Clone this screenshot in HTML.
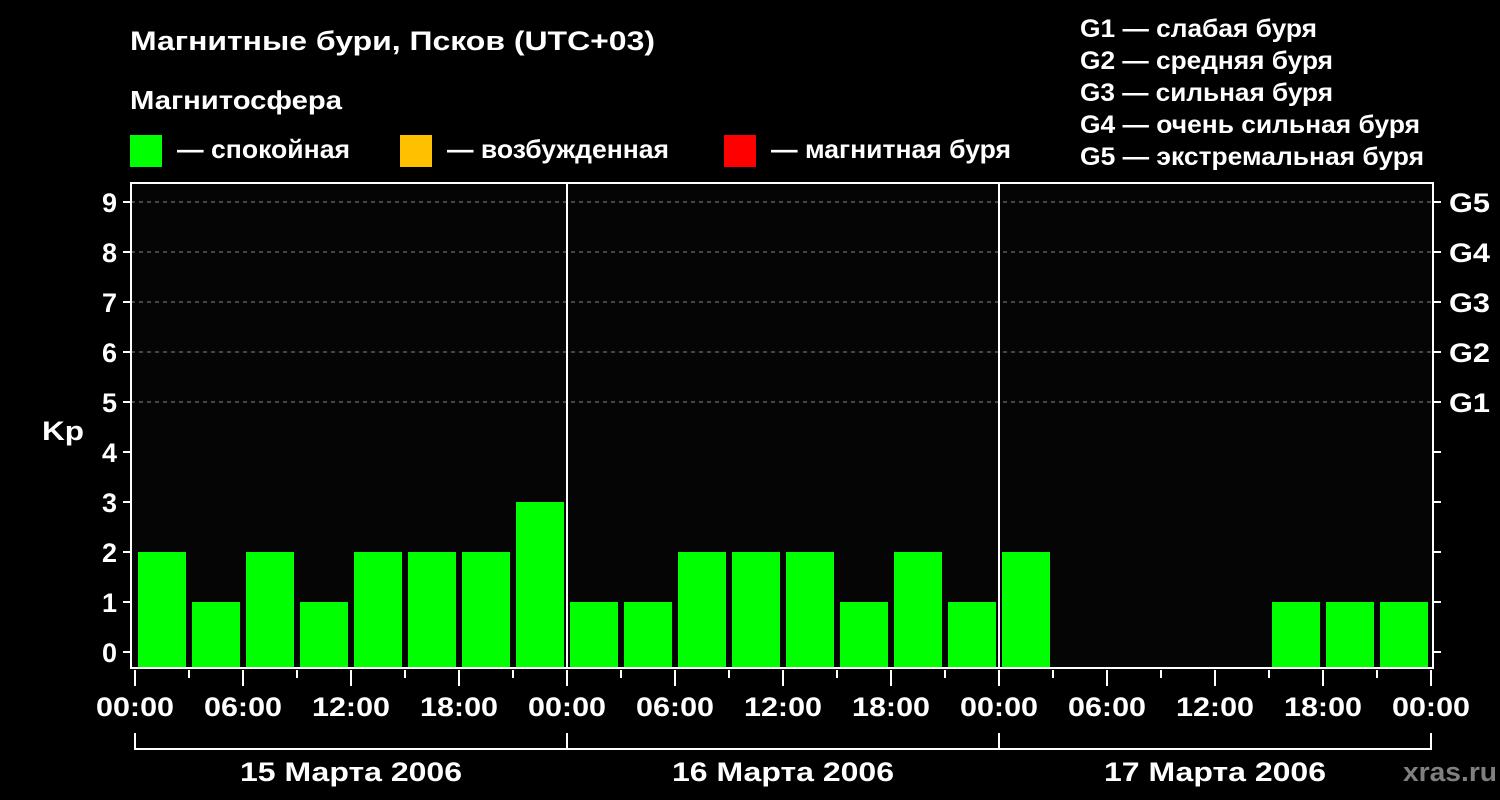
<!DOCTYPE html>
<html><head><meta charset="utf-8"><style>
html,body{margin:0;padding:0;background:#000;}
svg{display:block}
text{font-family:"Liberation Sans",Arial,sans-serif;font-weight:bold;fill:#fff}
</style></head><body>
<svg width="1500" height="800" viewBox="0 0 1500 800" xmlns="http://www.w3.org/2000/svg">
<rect width="1500" height="800" fill="#000"/>
<rect x="131" y="183" width="1302" height="485" fill="#050505"/>
<text x="130" y="50" font-size="27" textLength="525" lengthAdjust="spacingAndGlyphs">Магнитные бури, Псков (UTC+03)</text>
<text x="130" y="109" font-size="26" textLength="212" lengthAdjust="spacingAndGlyphs">Магнитосфера</text>
<rect x="130" y="135" width="32" height="32" fill="#00ff00"/>
<text x="177" y="158" font-size="26" textLength="173" lengthAdjust="spacingAndGlyphs">— спокойная</text>
<rect x="400" y="135" width="32" height="32" fill="#ffc000"/>
<text x="447" y="158" font-size="26" textLength="222" lengthAdjust="spacingAndGlyphs">— возбужденная</text>
<rect x="724" y="135" width="32" height="32" fill="#ff0000"/>
<text x="771" y="158" font-size="26" textLength="240" lengthAdjust="spacingAndGlyphs">— магнитная буря</text>
<g font-size="25">
<text x="1080" y="37" textLength="237" lengthAdjust="spacingAndGlyphs">G1 — слабая буря</text>
<text x="1080" y="69" textLength="253" lengthAdjust="spacingAndGlyphs">G2 — средняя буря</text>
<text x="1080" y="101" textLength="253" lengthAdjust="spacingAndGlyphs">G3 — сильная буря</text>
<text x="1080" y="133" textLength="340" lengthAdjust="spacingAndGlyphs">G4 — очень сильная буря</text>
<text x="1080" y="165" textLength="344" lengthAdjust="spacingAndGlyphs">G5 — экстремальная буря</text>
</g>
<g stroke="#888" stroke-width="1" stroke-dasharray="4,4">
<line x1="131" y1="202" x2="1433" y2="202"/><line x1="131" y1="252" x2="1433" y2="252"/>
<line x1="131" y1="302" x2="1433" y2="302"/><line x1="131" y1="352" x2="1433" y2="352"/>
<line x1="131" y1="402" x2="1433" y2="402"/>
</g>
<g fill="#00ff00">
<rect x="138" y="552" width="48" height="115"/><rect x="192" y="602" width="48" height="65"/>
<rect x="246" y="552" width="48" height="115"/><rect x="300" y="602" width="48" height="65"/>
<rect x="354" y="552" width="48" height="115"/><rect x="408" y="552" width="48" height="115"/>
<rect x="462" y="552" width="48" height="115"/><rect x="516" y="502" width="48" height="165"/>
<rect x="570" y="602" width="48" height="65"/><rect x="624" y="602" width="48" height="65"/>
<rect x="678" y="552" width="48" height="115"/><rect x="732" y="552" width="48" height="115"/>
<rect x="786" y="552" width="48" height="115"/><rect x="840" y="602" width="48" height="65"/>
<rect x="894" y="552" width="48" height="115"/><rect x="948" y="602" width="48" height="65"/>
<rect x="1002" y="552" width="48" height="115"/>
<rect x="1272" y="602" width="48" height="65"/><rect x="1326" y="602" width="48" height="65"/>
<rect x="1380" y="602" width="48" height="65"/>
</g>
<g stroke="#fff" stroke-width="2" fill="none">
<rect x="131" y="183" width="1302" height="485"/>
<line x1="567" y1="183" x2="567" y2="668"/><line x1="999" y1="183" x2="999" y2="668"/>
<path d="M123 202H131M123 252H131M123 302H131M123 352H131M123 402H131M123 452H131M123 502H131M123 552H131M123 602H131M123 652H131"/>
<path d="M1433 202H1441M1433 252H1441M1433 302H1441M1433 352H1441M1433 402H1441M1433 452H1441M1433 502H1441M1433 552H1441M1433 602H1441M1433 652H1441"/>
<path d="M135 670V686M189 670V678M243 670V686M297 670V678M351 670V686M405 670V678M459 670V686M513 670V678M567 670V686M621 670V678M675 670V686M729 670V678M783 670V686M837 670V678M891 670V686M945 670V678M999 670V686M1053 670V678M1107 670V686M1161 670V678M1215 670V686M1269 670V678M1323 670V686M1377 670V678M1431 670V686"/>
<path d="M135 733V749H1431V733M567 733V749M999 733V749"/>
</g>
<g font-size="27" text-anchor="end">
<text x="117" y="212">9</text><text x="117" y="262">8</text><text x="117" y="312">7</text>
<text x="117" y="362">6</text><text x="117" y="412">5</text><text x="117" y="462">4</text>
<text x="117" y="512">3</text><text x="117" y="562">2</text><text x="117" y="612">1</text>
<text x="117" y="662">0</text>
</g>
<text x="42" y="440" font-size="27" textLength="42" lengthAdjust="spacingAndGlyphs">Kp</text>
<g font-size="27">
<text x="1449" y="212" textLength="41" lengthAdjust="spacingAndGlyphs">G5</text><text x="1449" y="262" textLength="41" lengthAdjust="spacingAndGlyphs">G4</text><text x="1449" y="312" textLength="41" lengthAdjust="spacingAndGlyphs">G3</text>
<text x="1449" y="362" textLength="41" lengthAdjust="spacingAndGlyphs">G2</text><text x="1449" y="412" textLength="41" lengthAdjust="spacingAndGlyphs">G1</text>
</g>
<g font-size="27">
<text x="96" y="716" textLength="78" lengthAdjust="spacingAndGlyphs">00:00</text>
<text x="204" y="716" textLength="78" lengthAdjust="spacingAndGlyphs">06:00</text>
<text x="312" y="716" textLength="78" lengthAdjust="spacingAndGlyphs">12:00</text>
<text x="420" y="716" textLength="78" lengthAdjust="spacingAndGlyphs">18:00</text>
<text x="528" y="716" textLength="78" lengthAdjust="spacingAndGlyphs">00:00</text>
<text x="636" y="716" textLength="78" lengthAdjust="spacingAndGlyphs">06:00</text>
<text x="744" y="716" textLength="78" lengthAdjust="spacingAndGlyphs">12:00</text>
<text x="852" y="716" textLength="78" lengthAdjust="spacingAndGlyphs">18:00</text>
<text x="960" y="716" textLength="78" lengthAdjust="spacingAndGlyphs">00:00</text>
<text x="1068" y="716" textLength="78" lengthAdjust="spacingAndGlyphs">06:00</text>
<text x="1176" y="716" textLength="78" lengthAdjust="spacingAndGlyphs">12:00</text>
<text x="1284" y="716" textLength="78" lengthAdjust="spacingAndGlyphs">18:00</text>
<text x="1392" y="716" textLength="78" lengthAdjust="spacingAndGlyphs">00:00</text>
<text x="240" y="781" textLength="222" lengthAdjust="spacingAndGlyphs">15 Марта 2006</text>
<text x="672" y="781" textLength="222" lengthAdjust="spacingAndGlyphs">16 Марта 2006</text>
<text x="1104" y="781" textLength="222" lengthAdjust="spacingAndGlyphs">17 Марта 2006</text>
</g>
<text x="1403" y="781" font-size="27" textLength="94" lengthAdjust="spacingAndGlyphs" style="fill:#808080">xras.ru</text>
</svg>
</body></html>
